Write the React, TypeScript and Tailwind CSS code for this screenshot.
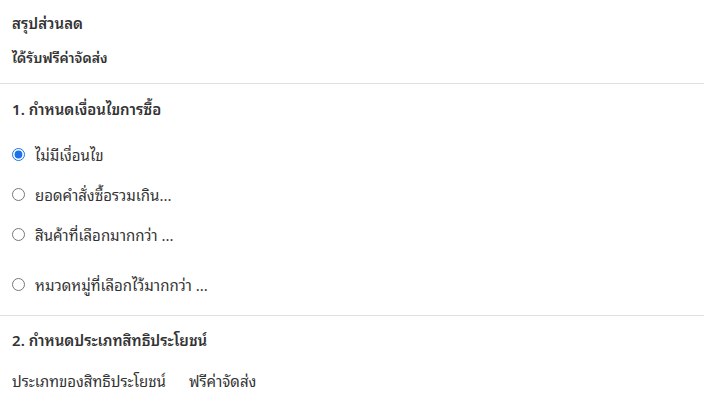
import React, { useState } from 'react';

const options = [
  'ไม่มีเงื่อนไข',
  'ยอดคำสั่งซื้อรวมเกิน...',
  'สินค้าที่เลือกมากกว่า ...',
  'หมวดหมู่ที่เลือกไว้มากกว่า ...',
];

const App: React.FC = () => {
  const [selected, setSelected] = useState(0);

  return (
    <div className="min-h-screen bg-white text-[#333] text-[15px]" style={{ fontFamily: '"Noto Sans Thai Looped", "Noto Sans", "Noto Sans Thai", sans-serif' }}>
      <section className="px-3 pt-[11px] pb-[15px] border-b border-[#e0e0e0]">
        <h2 className="font-semibold text-[15px] leading-[22px]">สรุปส่วนลด</h2>
        <p className="mt-[13px] font-semibold text-[14px] leading-[22px]">ได้รับฟรีค่าจัดส่ง</p>
      </section>

      <section className="px-3 pt-[13px] pb-[20px] border-b border-[#e0e0e0]">
        <h2 className="font-semibold text-[15px] leading-[22px]">1. กำหนดเงื่อนไขการซื้อ</h2>
        <div className="mt-[24px] flex flex-col">
          {options.map((o, i) => (
            <label
              key={o}
              className={`flex items-center gap-[10px] leading-[22px] cursor-pointer ${i === 0 ? '' : i === 3 ? 'mt-[28px]' : 'mt-[18px]'}`}
            >
              <input
                type="radio"
                name="cond"
                checked={selected === i}
                onChange={() => setSelected(i)}
                className="w-[13px] h-[13px] m-0 accent-[#1a73e8]"
              />
              <span>{o}</span>
            </label>
          ))}
        </div>
      </section>

      <section className="px-3 pt-[12px]">
        <h2 className="font-semibold text-[15px] leading-[22px]">2. กำหนดประเภทสิทธิประโยชน์</h2>
        <div className="mt-[19px] flex leading-[22px]">
          <span className="w-[177px]">ประเภทของสิทธิประโยชน์</span>
          <span>ฟรีค่าจัดส่ง</span>
        </div>
      </section>
    </div>
  );
};

export default App;
